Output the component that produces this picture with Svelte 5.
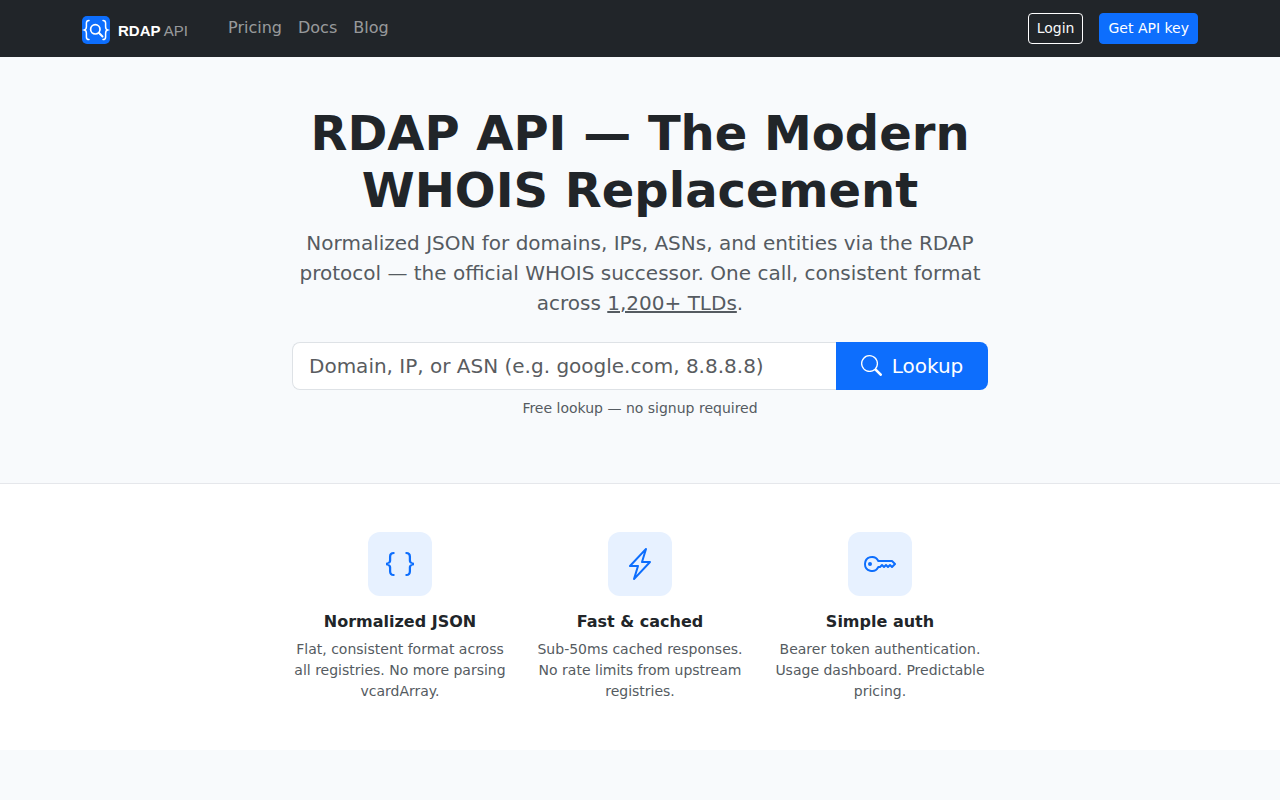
<script>
	const features = [
		{
			title: 'Normalized JSON',
			text: 'Flat, consistent format across all registries. No more parsing vcardArray.',
			paths: [
				'M2.114 8.063V7.9c1.005-.102 1.497-.615 1.497-1.6V4.503c0-1.094.39-1.538 1.354-1.538h.273V2h-.376C3.25 2 2.49 2.759 2.49 4.352v1.524c0 1.094-.376 1.456-1.49 1.456v1.299c1.114 0 1.49.362 1.49 1.456v1.524c0 1.593.759 2.352 2.372 2.352h.376v-.964h-.273c-.964 0-1.354-.444-1.354-1.538V9.663c0-.984-.492-1.497-1.497-1.6zM13.886 7.9v.163c-1.005.103-1.497.616-1.497 1.6v1.798c0 1.094-.39 1.538-1.354 1.538h-.273v.964h.376c1.613 0 2.372-.759 2.372-2.352v-1.524c0-1.094.376-1.456 1.49-1.456V7.332c-1.114 0-1.49-.362-1.49-1.456V4.352C13.51 2.759 12.75 2 11.138 2h-.376v.964h.273c.964 0 1.354.444 1.354 1.538V6.3c0 .984.492 1.497 1.497 1.6z'
			]
		},
		{
			title: 'Fast & cached',
			text: 'Sub-50ms cached responses. No rate limits from upstream registries.',
			paths: [
				'M11.251.068a.5.5 0 0 1 .227.58L9.677 6.5H13a.5.5 0 0 1 .364.843l-8 8.5a.5.5 0 0 1-.842-.49L6.323 9.5H3a.5.5 0 0 1-.364-.843l8-8.5a.5.5 0 0 1 .615-.09zM4.157 8.5H7a.5.5 0 0 1 .478.647L6.11 13.59l5.732-6.09H9a.5.5 0 0 1-.478-.647L9.89 2.41 4.157 8.5z'
			]
		},
		{
			title: 'Simple auth',
			text: 'Bearer token authentication. Usage dashboard. Predictable pricing.',
			paths: [
				'M0 8a4 4 0 0 1 7.465-2H14a.5.5 0 0 1 .354.146l1.5 1.5a.5.5 0 0 1 0 .708l-1.5 1.5a.5.5 0 0 1-.708 0L13 9.207l-.646.647a.5.5 0 0 1-.708 0L11 9.207l-.646.647a.5.5 0 0 1-.708 0L9 9.207l-.646.647A.5.5 0 0 1 8 10h-.535A4 4 0 0 1 0 8zm4-3a3 3 0 1 0 2.712 4.285A.5.5 0 0 1 7.163 9h.63l.853-.854a.5.5 0 0 1 .708 0l.646.647.646-.647a.5.5 0 0 1 .708 0l.646.647.646-.647a.5.5 0 0 1 .708 0l.646.647.793-.793-1-1h-6.63a.5.5 0 0 1-.451-.285A3 3 0 0 0 4 5z',
				'M4 8a1 1 0 1 1-2 0 1 1 0 0 1 2 0z'
			]
		}
	];
</script>

<nav class="navbar">
	<div class="container nav-inner">
		<a href="#home" class="brand">
			<svg class="logo" viewBox="0 0 28 28" width="28" height="28" aria-hidden="true">
				<rect width="28" height="28" rx="5" fill="#0d6efd" />
				<g fill="none" stroke="#fff" stroke-width="1.5" stroke-linecap="round">
					<path d="M7 4.5c-2 0-2.6 1-2.6 2.6v3.7c0 1.7-.6 2.8-2 3.2 1.4.4 2 1.500 2 3.200v3.700c0 1.600.6 2.600 2.600 2.600" />
					<path d="M21 4.500c2 0 2.600 1 2.600 2.600v3.700c0 1.700.6 2.800 2 3.200-1.400.4-2 1.500-2 3.200v3.700c0 1.600-.6 2.600-2.600 2.600" />
					<circle cx="13.300" cy="13.300" r="4.700" stroke-width="1.700" />
					<path d="M16.800 16.800l3.700 3.700" stroke-width="2" />
				</g>
			</svg>
			<span class="brand-text"><strong>RDAP</strong> <span>API</span></span>
		</a>
		<div class="nav-links">
			<a href="#pricing">Pricing</a>
			<a href="#docs">Docs</a>
			<a href="#blog">Blog</a>
		</div>
		<div class="nav-actions">
			<a href="#login" class="btn-login">Login</a>
			<a href="#key" class="btn-key">Get API key</a>
		</div>
	</div>
</nav>

<section class="hero">
	<h1>RDAP API — The Modern<br />WHOIS Replacement</h1>
	<p class="lead">
		Normalized JSON for domains, IPs, ASNs, and entities via the RDAP protocol — the official WHOIS
		successor. One call, consistent format across <a href="#tlds">1,200+ TLDs</a>.
	</p>
	<form class="lookup" onsubmit={(e) => e.preventDefault()}>
		<input type="text" placeholder="Domain, IP, or ASN (e.g. google.com, 8.8.8.8)" />
		<button type="submit">
			<svg viewBox="0 0 16 16" width="21" height="21" fill="currentColor" aria-hidden="true">
				<path d="M11.742 10.344a6.500 6.500 0 1 0-1.397 1.398h-.001c.03.04.062.078.098.115l3.850 3.850a1 1 0 0 0 1.415-1.414l-3.850-3.850a1.007 1.007 0 0 0-.115-.1zM12 6.500a5.500 5.500 0 1 1-11 0 5.500 5.500 0 0 1 11 0z" />
			</svg>
			Lookup
		</button>
	</form>
	<p class="hint">Free lookup — no signup required</p>
</section>

<section class="features">
	{#each features as f}
		<div class="feature">
			<div class="tile">
				<svg viewBox="0 0 16 16" width="32" height="32" fill="currentColor" aria-hidden="true">
					{#each f.paths as d}
						<path {d} />
					{/each}
				</svg>
			</div>
			<h3>{f.title}</h3>
			<p>{f.text}</p>
		</div>
	{/each}
</section>

<div class="after"></div>

<style>
	:global(body) {
		margin: 0;
		background: #fff;
		color: #212529;
		font-family: 'DejaVu Sans', sans-serif;
		font-size: 16px;
		line-height: 1.5;
	}

	.container {
		max-width: 1116px;
		margin: 0 auto;
	}

	.navbar {
		background: #212529;
		height: 57px;
	}

	.nav-inner {
		height: 100%;
		display: flex;
		align-items: center;
	}

	.brand {
		display: flex;
		align-items: center;
		gap: 8px;
		color: #fff;
		text-decoration: none;
		margin-top: 3px;
		margin-right: 40px;
	}

	.logo {
		display: block;
	}

	.brand-text {
		font-family: 'Liberation Sans', Arial, sans-serif;
		font-size: 15px;
		line-height: 1;
	}

	.brand-text span {
		color: rgba(255, 255, 255, 0.55);
	}

	.nav-links {
		display: flex;
		gap: 16px;
		margin-top: -2px;
	}

	.nav-links a {
		color: rgba(255, 255, 255, 0.55);
		text-decoration: none;
	}

	.nav-actions {
		margin-left: auto;
		display: flex;
		gap: 16px;
	}

	.btn-login,
	.btn-key {
		font-size: 14px;
		line-height: 21px;
		padding: 4px 8px;
		border-radius: 4px;
		border: 1px solid #fff;
		color: #f8f9fa;
		text-decoration: none;
	}

	.btn-key {
		background: #0d6efd;
		border-color: #0d6efd;
		color: #fff;
	}

	.hero {
		background: #f8fafc;
		border-bottom: 1px solid #e5e7eb;
		height: 427px;
		box-sizing: border-box;
		padding-top: 48px;
		display: flex;
		flex-direction: column;
		align-items: center;
		text-align: center;
	}

	h1 {
		margin: 0 0 9px;
		font-size: 48px;
		line-height: 57px;
		font-weight: 700;
	}

	.lead {
		width: 696px;
		margin: 0 0 24px;
		font-size: 20px;
		line-height: 30px;
		color: #555b61;
	}

	.lead a {
		color: inherit;
	}

	.lookup {
		width: 696px;
		display: flex;
		height: 48px;
	}

	input {
		flex: 1;
		min-width: 0;
		box-sizing: border-box;
		height: 48px;
		padding: 8px 16px;
		font: inherit;
		font-size: 20px;
		line-height: 30px;
		color: #212529;
		background: #fff;
		border: 1px solid #dee2e6;
		border-right: 0;
		border-radius: 8px 0 0 8px;
		outline: none;
	}

	input::placeholder {
		color: #595c5f;
		opacity: 1;
	}

	button {
		width: 152px;
		height: 48px;
		display: flex;
		align-items: center;
		justify-content: center;
		gap: 10px;
		font: inherit;
		font-size: 20px;
		color: #fff;
		background: #0d6efd;
		border: 0;
		border-radius: 0 8px 8px 0;
		cursor: pointer;
	}

	button svg {
		margin-top: -1px;
	}

	.hint {
		margin: 8px 0 0;
		font-size: 14px;
		line-height: 21px;
		color: #555b61;
	}

	.features {
		height: 266px;
		box-sizing: border-box;
		padding-top: 48px;
		display: grid;
		grid-template-columns: repeat(3, 240px);
		justify-content: center;
		background: #fff;
	}

	.feature {
		padding: 0 12px;
		text-align: center;
	}

	.tile {
		width: 64px;
		height: 64px;
		margin: 0 auto 16px;
		display: flex;
		align-items: center;
		justify-content: center;
		background: #e7f1ff;
		border-radius: 12px;
		color: #0d6efd;
	}

	h3 {
		margin: 0 0 8px;
		font-size: 16px;
		line-height: 19.2px;
		font-weight: 700;
	}

	.feature p {
		margin: 0;
		font-size: 14px;
		line-height: 21px;
		color: #555b61;
	}

	.after {
		background: #f8fafc;
		height: 50px;
	}
</style>
